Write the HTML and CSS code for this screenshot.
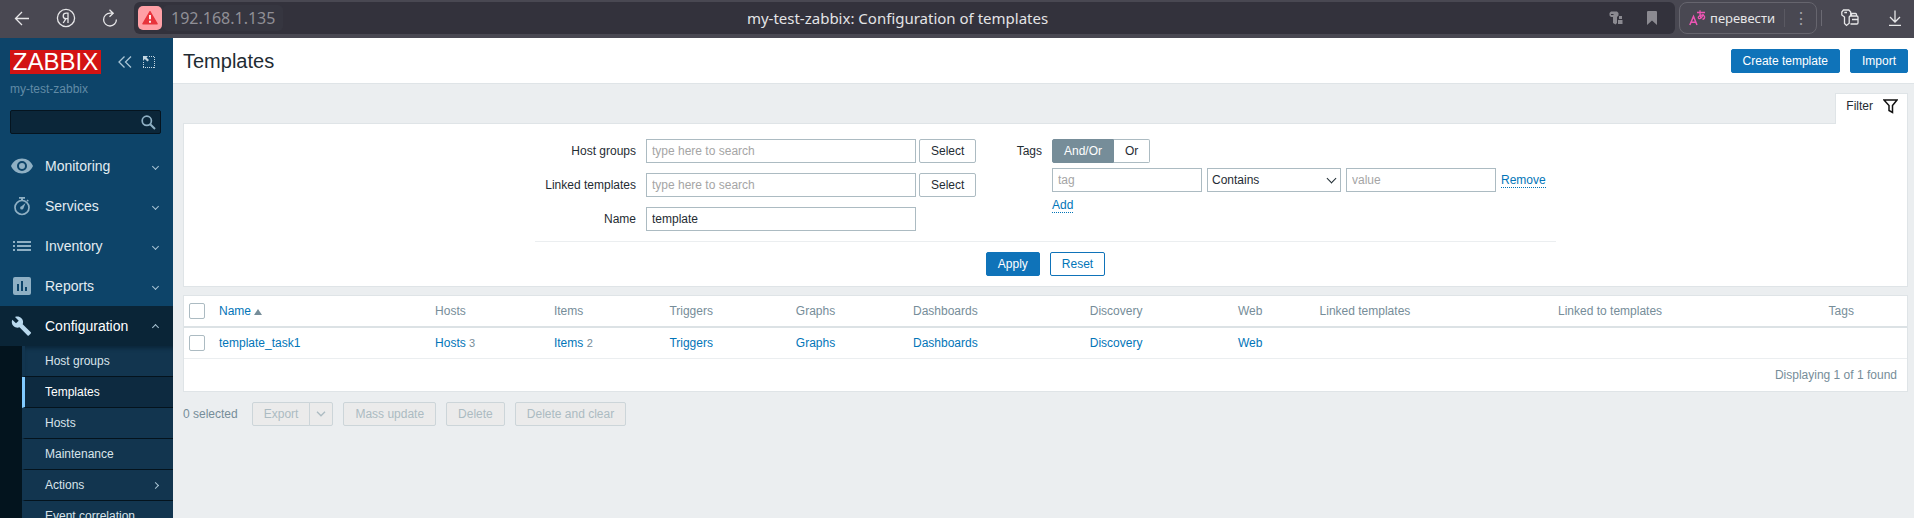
FILE: index.html
```html
<!DOCTYPE html>
<html lang="en">
<head>
<meta charset="utf-8">
<title>my-test-zabbix: Configuration of templates</title>
<link rel="stylesheet" href="styles.css">
</head>
<body>
<div class="browser">
  <div class="browser-nav">
    <button class="browser-btn" aria-label="Back"><svg width="16" height="16" viewBox="0 0 16 16"><path d="M15 8.500H1.500M8 2L1.500 8.500 8 15"/></svg></button>
    <button class="browser-btn" aria-label="Yandex"><svg width="20" height="20" viewBox="0 0 20 20"><circle cx="10" cy="10" r="8.600"/><path d="M12 15V5.200H10.300C8.300 5.200 7.200 6.400 7.200 8c0 1.700 1.200 2.700 2.800 2.700h2M10 10.700L7.200 15"/></svg></button>
    <button class="browser-btn" aria-label="Reload"><svg width="16" height="18" viewBox="0 0 16 18"><path d="M10.500 4.200H8A6.400 6.400 0 1 0 14.400 10.500M7.500 .8L11.200 4.200 7.500 7.800"/></svg></button>
  </div>
  <div class="address">
    <span class="site">
      <span class="warn"><svg width="16" height="14" viewBox="0 0 16 14"><path d="M8 .8L15 12.800H1z" fill="#e8343c" stroke="#e8343c" stroke-width="1.600" stroke-linejoin="round"/><path d="M8 4v4.300M8 9.800v2" stroke="#fff" stroke-width="1.800"/></svg></span>
      <span class="host">192.168.1.135</span>
    </span>
    <span class="page-name">my-test-zabbix: Configuration of templates</span>
    <span class="address-icons">
      <svg width="14" height="14" viewBox="0 0 14 14"><path d="M2 .5h6l1.500 1.500v2.500L8 6v6L6.500 13.500 4 12V6H2L.5 4.500V2z" fill="#8b8a91"/><path d="M2 3.500h2.500" stroke="#33323c"/><path d="M10 5h3v3h-3zM9 9h4.500v4H9z" fill="#8b8a91"/></svg>
      <svg width="10" height="14" viewBox="0 0 10 14"><path d="M1 0h8q1 0 1 1v13L5 9.500 0 14V1q0-1 1-1z" fill="#8b8a91"/></svg>
    </span>
  </div>
  <button class="translate"><svg width="17" height="16" viewBox="0 0 17 16"><g fill="none" stroke="#ee55b4" stroke-width="1.500"><path d="M.8 15L4.500 6.500 8 15M2 12.300h5"/><path d="M8 2.500h8M11 .3c-.3 4 0 6 1 8.500M14.300 4c-.7 3-2.700 5-4.400 4.600-1.500-.6-.2-3.600 3.100-3.500 3.300.1 3.500 3.600.5 4.300" stroke-width="1.300"/></g></svg><span class="translate-text">перевести</span><span class="translate-more">⋮</span></button>
  <span class="browser-sep"></span>
  <button class="browser-btn pass" aria-label="Passwords"><svg width="18" height="18" viewBox="0 0 18 18"><path d="M2.500 1h5.300L9.700 3v3.300L8.200 8v6.300L5.500 16.500l-2-2V8L.8 6V3zM3.300 3.500h2.700M10.500 7V4.500h4q1 0 1 1V7M9.500 7h6.300q1.200 0 1.200 1.200v5.600q0 1.200-1.200 1.200H9.500M11 10.500h6"/></svg></button>
  <button class="browser-btn" aria-label="Downloads"><svg width="12" height="16" viewBox="0 0 12 16"><path d="M6 .5v11M1 7l5 5 5-5M0 15.300h12"/></svg></button>
</div>

<div class="app">
  <aside class="sidebar">
    <div class="side-head">
      <a class="logo" href="#">ZABBIX</a>
      <button class="side-btn" aria-label="Collapse"><svg width="14" height="12" viewBox="0 0 14 12"><path d="M6.500 .5L1 6l5.500 5.500M13 .5L7.500 6l5.500 5.500" fill="none" stroke="#a9c4d4" stroke-width="1.300"/></svg></button>
      <button class="side-btn" aria-label="Kiosk mode"><svg width="12" height="12" viewBox="0 0 12 12"><path d="M6 .5h6M11.500 1v11M11 11.500H0M.5 11V5" fill="none" stroke="#c3d6e1" stroke-dasharray="1 1"/><path d="M0 0h5L3.500 1.500 6 4 4.500 5.500 1.800 3 0 5z" fill="#c3d6e1"/></svg></button>
    </div>
    <div class="server">my-test-zabbix</div>
    <form class="search"><input type="text" aria-label="Search"><button type="button" aria-label="Search"><svg width="15" height="15" viewBox="0 0 15 15"><circle cx="5.800" cy="5.800" r="4.600" fill="none" stroke="#8fb0c4" stroke-width="1.700"/><path d="M9.200 9.200l4.800 4.800" stroke="#8fb0c4" stroke-width="2"/></svg></button></form>
    <nav class="menu">
      <a class="item" href="#"><svg width="22" height="16" viewBox="0 0 22 16"><path fill-rule="evenodd" d="M11 .5C6 .5 1.800 3.600 0 8c1.800 4.400 6 7.500 11 7.500S20.200 12.400 22 8C20.200 3.600 16 .5 11 .5zM11 13a5 5 0 1 1 0-10 5 5 0 0 1 0 10zm0-8a3 3 0 1 0 0 6 3 3 0 0 0 0-6z"/></svg><span>Monitoring</span><i class="chev"></i></a>
      <a class="item" href="#"><svg width="22" height="20" viewBox="0 0 22 20"><circle cx="11" cy="11.500" r="7" fill="none" stroke="#8fb0c4" stroke-width="1.700"/><path d="M8 1h6v1.700h-2V5h-2V2.700H8zM15.500 4.500l1-1 1.300 1.300-1 1zM14.500 7l-2 5.200a1.700 1.700 0 1 1-2-2z"/></svg><span>Services</span><i class="chev"></i></a>
      <a class="item" href="#"><svg width="22" height="12" viewBox="0 0 22 12"><path d="M2 1h2v2H2zM6 1h14v2H6zM2 5h2v2H2zM6 5h14v2H6zM2 9h2v2H2zM6 9h14v2H6z"/></svg><span>Inventory</span><i class="chev"></i></a>
      <a class="item" href="#"><svg width="22" height="18" viewBox="0 0 22 18"><path fill-rule="evenodd" d="M4 0h14q2 0 2 2v14q0 2-2 2H4q-2 0-2-2V2q0-2 2-2zM6 7v7h2V7zM10 4v10h2V4zM14 10v4h2v-4z"/></svg><span>Reports</span><i class="chev"></i></a>
      <a class="item open" href="#"><svg width="22" height="20" viewBox="0 0 22 20"><path d="M19.800 16.300L11.700 8.200C12.500 6.200 12.100 3.800 10.400 2.200 8.700.4 6 .1 4 1l3.700 3.700L5 7.300 1.300 3.700C.3 5.700.8 8.300 2.500 10c1.700 1.700 4 2 6 1.300l8.100 8.100c.4.400.9.400 1.200 0l2-2c.4-.3.4-.9 0-1.100z"/></svg><span>Configuration</span><i class="chev up"></i></a>
      <div class="submenu">
        <a href="#">Host groups</a>
        <a class="current" href="#">Templates</a>
        <a href="#">Hosts</a>
        <a href="#">Maintenance</a>
        <a href="#">Actions<i class="chev right"></i></a>
        <a href="#">Event correlation</a>
      </div>
    </nav>
  </aside>

  <main class="main">
    <header class="title-bar">
      <h1>Templates</h1>
      <button class="btn primary">Create template</button>
      <button class="btn primary">Import</button>
    </header>
    <div class="content">
      <div class="tabs"><button class="tab">Filter<svg width="15" height="15" viewBox="0 0 15 15"><path d="M1 1h13L9.500 6.500V13.500L6 11.500V6.500z" fill="none" stroke="#111" stroke-width="1.500"/></svg></button></div>
      <form class="filter">
        <div class="filter-body">
          <div class="fields">
            <label for="groups">Host groups</label>
            <div class="field"><input id="groups" class="text wide" type="text" placeholder="type here to search"><button type="button" class="btn plain">Select</button></div>
            <label for="linked">Linked templates</label>
            <div class="field"><input id="linked" class="text wide" type="text" placeholder="type here to search"><button type="button" class="btn plain">Select</button></div>
            <label for="name">Name</label>
            <div class="field"><input id="name" class="text wide" type="text" value="template"></div>
          </div>
          <div class="fields tags">
            <span class="label">Tags</span>
            <div class="tag-col">
              <div class="radios">
                <label><input type="radio" name="op" checked><span>And/Or</span></label>
                <label><input type="radio" name="op"><span>Or</span></label>
              </div>
              <div class="tag-row">
                <input class="text" type="text" placeholder="tag" aria-label="tag">
                <span class="select"><select aria-label="Operator"><option>Contains</option></select></span>
                <input class="text" type="text" placeholder="value" aria-label="value">
                <button type="button" class="link">Remove</button>
              </div>
              <button type="button" class="link">Add</button>
            </div>
          </div>
        </div>
        <div class="filter-foot"><button type="button" class="btn primary">Apply</button><button type="button" class="btn outline">Reset</button></div>
      </form>

      <table class="list">
        <colgroup><col class="c-check"><col class="c-name"><col class="c-hosts"><col class="c-items"><col class="c-trig"><col class="c-graphs"><col class="c-dash"><col class="c-disc"><col class="c-web"><col class="c-linked"><col class="c-linkedto"><col></colgroup>
        <thead><tr><th><input type="checkbox" aria-label="Select all"></th><th><a href="#">Name<i class="sort"></i></a></th><th>Hosts</th><th>Items</th><th>Triggers</th><th>Graphs</th><th>Dashboards</th><th>Discovery</th><th>Web</th><th>Linked templates</th><th>Linked to templates</th><th>Tags</th></tr></thead>
        <tbody>
          <tr><td><input type="checkbox" aria-label="Select template_task1"></td><td><a href="#">template_task1</a></td><td><a href="#">Hosts</a> <small>3</small></td><td><a href="#">Items</a> <small>2</small></td><td><a href="#">Triggers</a></td><td><a href="#">Graphs</a></td><td><a href="#">Dashboards</a></td><td><a href="#">Discovery</a></td><td><a href="#">Web</a></td><td></td><td></td><td></td></tr>
        </tbody>
        <tfoot><tr><td colspan="12">Displaying 1 of 1 found</td></tr></tfoot>
      </table>

      <div class="actions">
        <span class="count">0 selected</span>
        <span class="split"><button class="btn" disabled>Export</button><button class="btn more" disabled aria-label="Export options"><svg width="10" height="6" viewBox="0 0 10 6"><path d="M1 .8l4 4 4-4" fill="none" stroke="#acbbc2" stroke-width="1.300"/></svg></button></span>
        <button class="btn" disabled>Mass update</button>
        <button class="btn" disabled>Delete</button>
        <button class="btn" disabled>Delete and clear</button>
      </div>
    </div>
  </main>
</div>
</body>
</html>
```
FILE: styles.css
```css
* { box-sizing: border-box; }
body {
  margin: 0;
  height: 100vh;
  overflow: hidden;
  display: flex;
  flex-direction: column;
  background: #ebeef0;
  color: #1f2c33;
  font: 12px/14px "Liberation Sans", Arial, sans-serif;
}
button, input, select { font: inherit; color: inherit; margin: 0; }
button { padding: 0; border: 0; background: none; }
a { color: #0275b8; text-decoration: none; }
svg { display: block; flex: none; }

/* Browser chrome */
.browser {
  flex: none;
  display: flex;
  align-items: center;
  height: 38px;
  padding: 0 13px 2px 14px;
  background: #494852;
  font-family: "Noto Sans", sans-serif;
}
.browser-nav { display: flex; gap: 26px; width: 120px; align-items: center; }
.browser-btn svg { fill: none; stroke: #e6e6e8; stroke-width: 1.3; }
.address {
  flex: 1;
  display: grid;
  grid-template-columns: 1fr auto 1fr;
  align-items: center;
  height: 32px;
  padding: 0 18px 0 4px;
  border-radius: 6px;
  background: #33323c;
}
.site { display: flex; align-items: center; }
.warn {
  display: grid;
  place-items: center;
  width: 24px;
  height: 24px;
  border-radius: 5px;
  background: #ffa0a6;
}
.host {
  height: 26px;
  padding: 0 8px;
  margin-left: 1px;
  border-radius: 5px;
  background: #363640;
  color: #908f96;
  font-size: 16px;
  line-height: 26px;
}
.page-name { color: #e4e4e6; font-size: 15px; line-height: 20px; }
.address-icons { display: flex; justify-content: flex-end; gap: 24px; }
.translate {
  display: flex;
  align-items: center;
  height: 32px;
  width: 138px;
  margin-left: 4px;
  padding-left: 9px;
  border: 1px solid #66656e;
  border-radius: 8px;
  color: #e6e6e8;
  font-family: "Noto Sans", sans-serif;
}
.translate-text { margin-left: 4px; font-size: 13px; line-height: 18px; }
.translate-more { margin-left: auto; width: 32px; border-left: 1px solid #5a5962; color: #a2a1a8; font-size: 16px; line-height: 18px; }
.browser-sep { width: 1px; height: 16px; margin: 0 19px 0 4px; background: #6b6a73; }
.pass { margin-right: 30px; }

/* Sidebar */
.app { flex: 1; display: flex; min-height: 0; }
.sidebar {
  flex: none;
  width: 173px;
  padding-top: 12px;
  overflow: hidden;
  background: #0d4469;
}
.side-head { display: flex; align-items: center; padding-left: 10px; }
.logo {
  width: 91px;
  margin-right: 17px;
  background: #d31313;
  color: #fff;
  font-size: 24px;
  line-height: 24px;
  text-align: center;
}
.side-btn { margin-right: 11px; }
.server { padding: 8px 10px 0; color: #618ba6; line-height: 14px; }
.search {
  display: flex;
  align-items: center;
  height: 24px;
  margin: 14px 12px 12px 10px;
  padding-right: 4px;
  border: 1px solid #05141f;
  border-radius: 2px;
  background: #0b2639;
}
.search input { flex: 1; min-width: 0; border: 0; background: none; color: #fff; outline: 0; }
.item {
  display: flex;
  align-items: center;
  height: 40px;
  padding: 0 14px 0 11px;
  color: #e3ecf1;
  font-size: 14px;
  line-height: 16px;
}
.item svg { margin-right: 12px; fill: #8fb0c4; }
.item.open { background: #0a2537; color: #fff; }
.item.open svg { fill: #b9d9ee; }
.chev {
  width: 5px;
  height: 5px;
  margin: 0 1px 0 auto;
  border: solid #a9c4d4;
  border-width: 0 1px 1px 0;
  transform: rotate(45deg);
}
.chev.up { margin-bottom: -2px; transform: rotate(225deg); }
.chev.right { transform: rotate(-45deg); }
.submenu { padding-left: 22px; background: #03141e; }
.submenu a {
  display: flex;
  align-items: center;
  height: 31px;
  padding: 0 14px 0 20px;
  border-left: 3px solid #12354f;
  border-bottom: 1px solid #04131d;
  background: #12354f;
  background-clip: padding-box;
  color: #d9e4eb;
}
.submenu a:first-child { box-shadow: inset 0 4px 4px -2px #0a2537; }
.submenu .current { border-left-color: #81caff; background-color: #0d2a40; color: #fff; }

/* Page */
.main { flex: 1; min-width: 0; }
.title-bar {
  display: flex;
  align-items: center;
  gap: 10px;
  height: 46px;
  padding: 0 6px 0 10px;
  border-bottom: 1px solid #dfe4e7;
  background: #fff;
}
h1 { flex: 1; margin: 0; font-size: 20px; font-weight: 400; line-height: 24px; }
.btn {
  height: 24px;
  padding: 0 11px;
  border: 1px solid #0275b8;
  border-radius: 2px;
  white-space: nowrap;
}
.btn.primary { background: #0f73b9; border-color: #0f73b9; color: #fff; }
.btn.outline { background: #fff; border-color: #0f73b9; color: #0275b8; }
.btn.plain { border-color: #acbbc2; background: #fff; }
.btn:disabled { border-color: #ccd5d9; background: #ebebeb; color: #acbbc2; }
.content { padding: 9px 6px 0 10px; }

.tabs { display: flex; justify-content: flex-end; }
.tab {
  display: flex;
  align-items: center;
  gap: 10px;
  height: 31px;
  margin-bottom: -1px;
  padding: 0 9px 6px 10px;
  border: 1px solid #dfe4e7;
  border-bottom: 0;
  background: #fff;
  position: relative;
}
.filter { padding: 15px 0 10px; border: 1px solid #dfe4e7; background: #fff; }
.filter-body, .filter-foot { width: 1021px; max-width: 100%; margin: 0 auto; }
.filter-body { display: flex; justify-content: space-between; padding-bottom: 10px; border-bottom: 1px solid #ebeef0; }
.filter-foot { display: flex; justify-content: center; gap: 10px; padding-top: 10px; }
.fields { display: grid; grid-template-columns: 101px auto; column-gap: 10px; row-gap: 10px; align-content: start; }
.fields > label, .label { line-height: 24px; text-align: right; }
.tags { grid-template-columns: auto 504px; }
.field { display: flex; gap: 3px; }
.text {
  width: 150px;
  height: 24px;
  padding: 0 5px;
  border: 1px solid #acbbc2;
  border-radius: 0;
  background: #fff;
}
.text.wide { width: 270px; }
.text::placeholder { color: #a5a5a5; opacity: 1; }
.radios { display: flex; }
.radios input { position: absolute; opacity: 0; }
.radios span {
  display: block;
  height: 24px;
  padding: 0 11px;
  border: 1px solid #acbbc2;
  border-left: 0;
  border-radius: 0 2px 2px 0;
  line-height: 22px;
}
.radios label:first-child span { border-radius: 2px 0 0 2px; border-left: 1px solid #768d99; }
.radios input:checked + span { border-color: #768d99; background: #768d99; color: #fff; }
.tag-row { display: flex; align-items: center; gap: 5px; margin: 5px 0 6px; }
.select {
  display: flex;
  align-items: center;
  width: 134px;
  height: 24px;
  border: 1px solid #acbbc2;
  background: #fff;
}
.select::after {
  content: "";
  flex: none;
  width: 6px;
  height: 6px;
  margin: 0 5px 3px 0;
  border: solid #1f2c33;
  border-width: 0 1px 1px 0;
  transform: rotate(45deg);
}
select {
  appearance: none;
  flex: 1;
  min-width: 0;
  height: 22px;
  padding: 0 4px;
  border: 0;
  background: none;
}
.link { border-bottom: 1px dotted #0275b8; color: #0275b8; line-height: 14px; }

/* Template list */
.list {
  width: 100%;
  margin-top: 8px;
  border: 1px solid #dfe4e7;
  border-collapse: separate;
  border-spacing: 0;
  table-layout: fixed;
  background: #fff;
}
.list th, .list td { padding: 0 5px; text-align: left; font-weight: 400; }
.list th { height: 32px; border-bottom: 2px solid #dce2e5; color: #768d99; }
.list td { height: 31px; border-bottom: 1px solid #ebeef0; }
.list tfoot td { height: 32px; padding-right: 10px; border-bottom: 0; color: #768d99; text-align: right; }
.list small { color: #768d99; font-size: 11px; }
.list input {
  appearance: none;
  display: block;
  width: 16px;
  height: 16px;
  border: 1px solid #acbbc2;
  border-radius: 2px;
  background: #fff;
}
.sort {
  display: inline-block;
  margin-left: 3px;
  border: 4px solid transparent;
  border-top: 0;
  border-bottom: 6px solid #768d99;
}
.c-check { width: 30px; }
.c-name { width: 12.54%; }
.c-hosts { width: 6.9%; }
.c-items { width: 6.7%; }
.c-trig { width: 7.34%; }
.c-graphs { width: 6.8%; }
.c-dash { width: 10.26%; }
.c-disc { width: 8.6%; }
.c-web { width: 4.74%; }
.c-linked { width: 13.84%; }
.c-linkedto { width: 15.7%; }

.actions { display: flex; align-items: center; gap: 10px; padding-top: 10px; }
.count { margin-right: 4px; color: #768d99; }
.split { display: flex; }
.split .btn:first-child { border-radius: 2px 0 0 2px; }
.split .more { width: 24px; margin-left: -1px; padding: 0 6px; border-radius: 0 2px 2px 0; }
```
